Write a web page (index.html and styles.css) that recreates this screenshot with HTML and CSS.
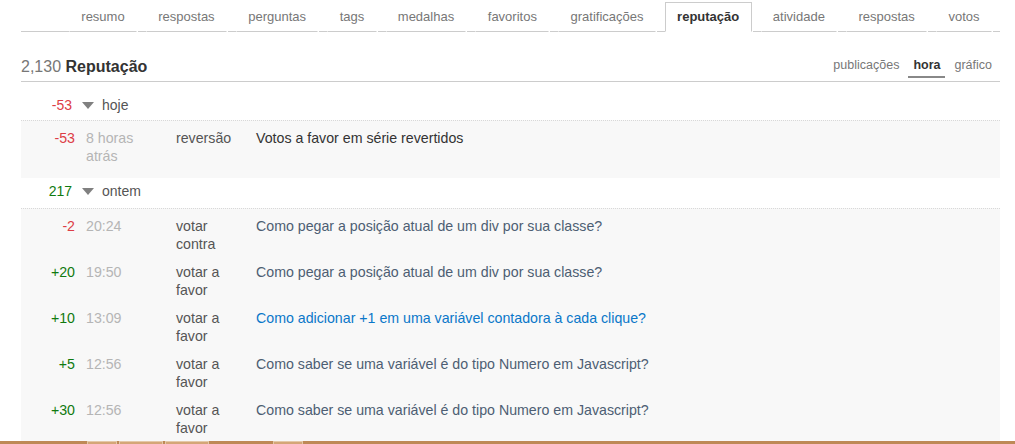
FILE: index.html
```html
<!DOCTYPE html>
<html lang="pt">
<head>
<meta charset="utf-8">
<title>Reputação</title>
<link rel="stylesheet" href="styles.css">
</head>
<body>
<div class="page">
  <nav class="tabs">
    <div class="tab first"><a>resumo</a></div>
    <div class="tab"><a>respostas</a></div>
    <div class="tab"><a>perguntas</a></div>
    <div class="tab"><a>tags</a></div>
    <div class="tab"><a>medalhas</a></div>
    <div class="tab"><a>favoritos</a></div>
    <div class="tab"><a>gratificações</a></div>
    <div class="tab active"><a>reputação</a></div>
    <div class="tab"><a>atividade</a></div>
    <div class="tab"><a>respostas</a></div>
    <div class="tab"><a>votos</a></div>
    <div class="tab-fill"></div>
  </nav>

  <div class="heading">
    <h1 class="title"><span class="count">2,130</span> <b>Reputação</b></h1>
    <div class="subtabs">
      <a>publicações</a>
      <a class="on">hora</a>
      <a>gráfico</a>
    </div>
  </div>

  <div class="group-head first-group">
    <span class="gnum neg">-53</span>
    <span class="caret"></span>
    <span class="glabel">hoje</span>
  </div>
  <div class="block">
    <div class="row">
      <span class="num neg">-53</span>
      <span class="time">8 horas atrás</span>
      <span class="type">reversão</span>
      <span class="desc plain">Votos a favor em série revertidos</span>
    </div>
  </div>

  <div class="group-head">
    <span class="gnum pos">217</span>
    <span class="caret"></span>
    <span class="glabel">ontem</span>
  </div>
  <div class="block">
    <div class="row">
      <span class="num neg">-2</span>
      <span class="time">20:24</span>
      <span class="type">votar contra</span>
      <a class="desc">Como pegar a posição atual de um div por sua classe?</a>
    </div>
    <div class="row">
      <span class="num pos">+20</span>
      <span class="time">19:50</span>
      <span class="type">votar a favor</span>
      <a class="desc">Como pegar a posição atual de um div por sua classe?</a>
    </div>
    <div class="row">
      <span class="num pos">+10</span>
      <span class="time">13:09</span>
      <span class="type">votar a favor</span>
      <a class="desc link">Como adicionar +1 em uma variável contadora à cada clique?</a>
    </div>
    <div class="row">
      <span class="num pos">+5</span>
      <span class="time">12:56</span>
      <span class="type">votar a favor</span>
      <a class="desc">Como saber se uma variável é do tipo Numero em Javascript?</a>
    </div>
    <div class="row">
      <span class="num pos">+30</span>
      <span class="time">12:56</span>
      <span class="type">votar a favor</span>
      <a class="desc">Como saber se uma variável é do tipo Numero em Javascript?</a>
    </div>
  </div>
</div>

<div class="taskbar">
  <span class="tb-item w1"></span>
  <span class="tb-item w2"></span>
  <span class="tb-item w2"></span>
  <span class="tb-gap"></span>
  <span class="tb-item w3"></span>
</div>
</body>
</html>
```

FILE: styles.css
```css
html, body {
  margin: 0;
  padding: 0;
  overflow: hidden;
  background: #fff;
}

body {
  font-family: "Liberation Sans", Arial, sans-serif;
  font-size: 13px;
  color: #333;
}

.page {
  width: 979px;
  margin-left: 21px;
}

/* ---------- top tabs ---------- */
.tabs {
  display: flex;
  margin-top: 2px;
}

.tab {
  display: flex;
  margin-right: 1px;
}

.tab::before {
  content: "";
  width: 8px;
  border-bottom: 1px solid #ccc;
}

.tab.first::before {
  width: 48px;
}

.tab a {
  display: block;
  padding: 0 11.3px;
  line-height: 28px;
  color: #777;
  border: 1px solid transparent;
  border-bottom-color: #ccc;
}

.tab.active a {
  color: #333;
  font-weight: bold;
  border-color: #ccc;
  border-bottom-color: #fff;
}

.tab-fill {
  flex: 1;
  border-bottom: 1px solid #ccc;
}

/* ---------- heading ---------- */
.heading {
  display: flex;
  justify-content: space-between;
  align-items: flex-end;
  margin-top: 24px;
  padding-bottom: 3px;
  border-bottom: 1px solid #ccc;
}

.title {
  margin: 0;
  font-size: 16px;
  line-height: 22px;
  font-weight: normal;
}

.title .count {
  color: #777;
}

.title b {
  color: #333;
}

.subtabs {
  display: flex;
  gap: 4px;
  margin-right: 3px;
}

.subtabs a {
  display: block;
  padding: 0 5px 2px;
  font-size: 12.5px;
  line-height: 18px;
  color: #777;
  border-bottom: 2px solid transparent;
}

.subtabs a.on {
  color: #333;
  font-weight: bold;
  border-bottom-color: #888;
}

/* ---------- groups ---------- */
.group-head {
  display: flex;
  align-items: center;
  padding: 4px 0 8px;
  line-height: 18px;
  font-size: 14px;
}

.group-head.first-group {
  margin-top: 10px;
  padding-bottom: 6px;
}

.gnum {
  width: 51px;
  text-align: right;
}

.caret {
  width: 0;
  height: 0;
  margin: 1px 8px 0 10px;
  border-left: 6px solid transparent;
  border-right: 6px solid transparent;
  border-top: 7px solid #808080;
}

.glabel {
  color: #555;
}

.neg { color: #dd3d46; }
.pos { color: #107a10; }

.block {
  background: #f8f8f8;
  border-top: 1px dotted #d8d8d8;
  padding: 3px 0 8px;
  font-size: 14.2px;
}

.row {
  display: flex;
  align-items: flex-start;
  padding: 5px 0;
  line-height: 18px;
}

.num {
  width: 54px;
  text-align: right;
}

.time {
  width: 70px;
  margin-left: 11px;
  color: #b5b5b5;
}

.type {
  width: 64px;
  margin-left: 20px;
  margin-right: 16px;
  color: #555;
}

.desc {
  color: #4d5e73;
  text-decoration: none;
}

.desc.plain {
  color: #333;
}

.desc.link {
  color: #0a77c9;
}

/* ---------- bottom strip (window taskbar peeking in) ---------- */
.taskbar {
  position: fixed;
  left: 0;
  right: 0;
  bottom: 0;
  height: 3px;
  display: flex;
  gap: 2px;
  padding-left: 87px;
  background: #be8956;
}

.tb-item {
  height: 3px;
  box-sizing: border-box;
  border: 1px solid #e4c9a8;
  border-bottom: none;
  background: #d4a677;
}

.tb-item.w1 { width: 30px; }
.tb-item.w2 { width: 44px; }
.tb-item.w3 { width: 30px; }
.tb-gap { width: 60px; }
```
